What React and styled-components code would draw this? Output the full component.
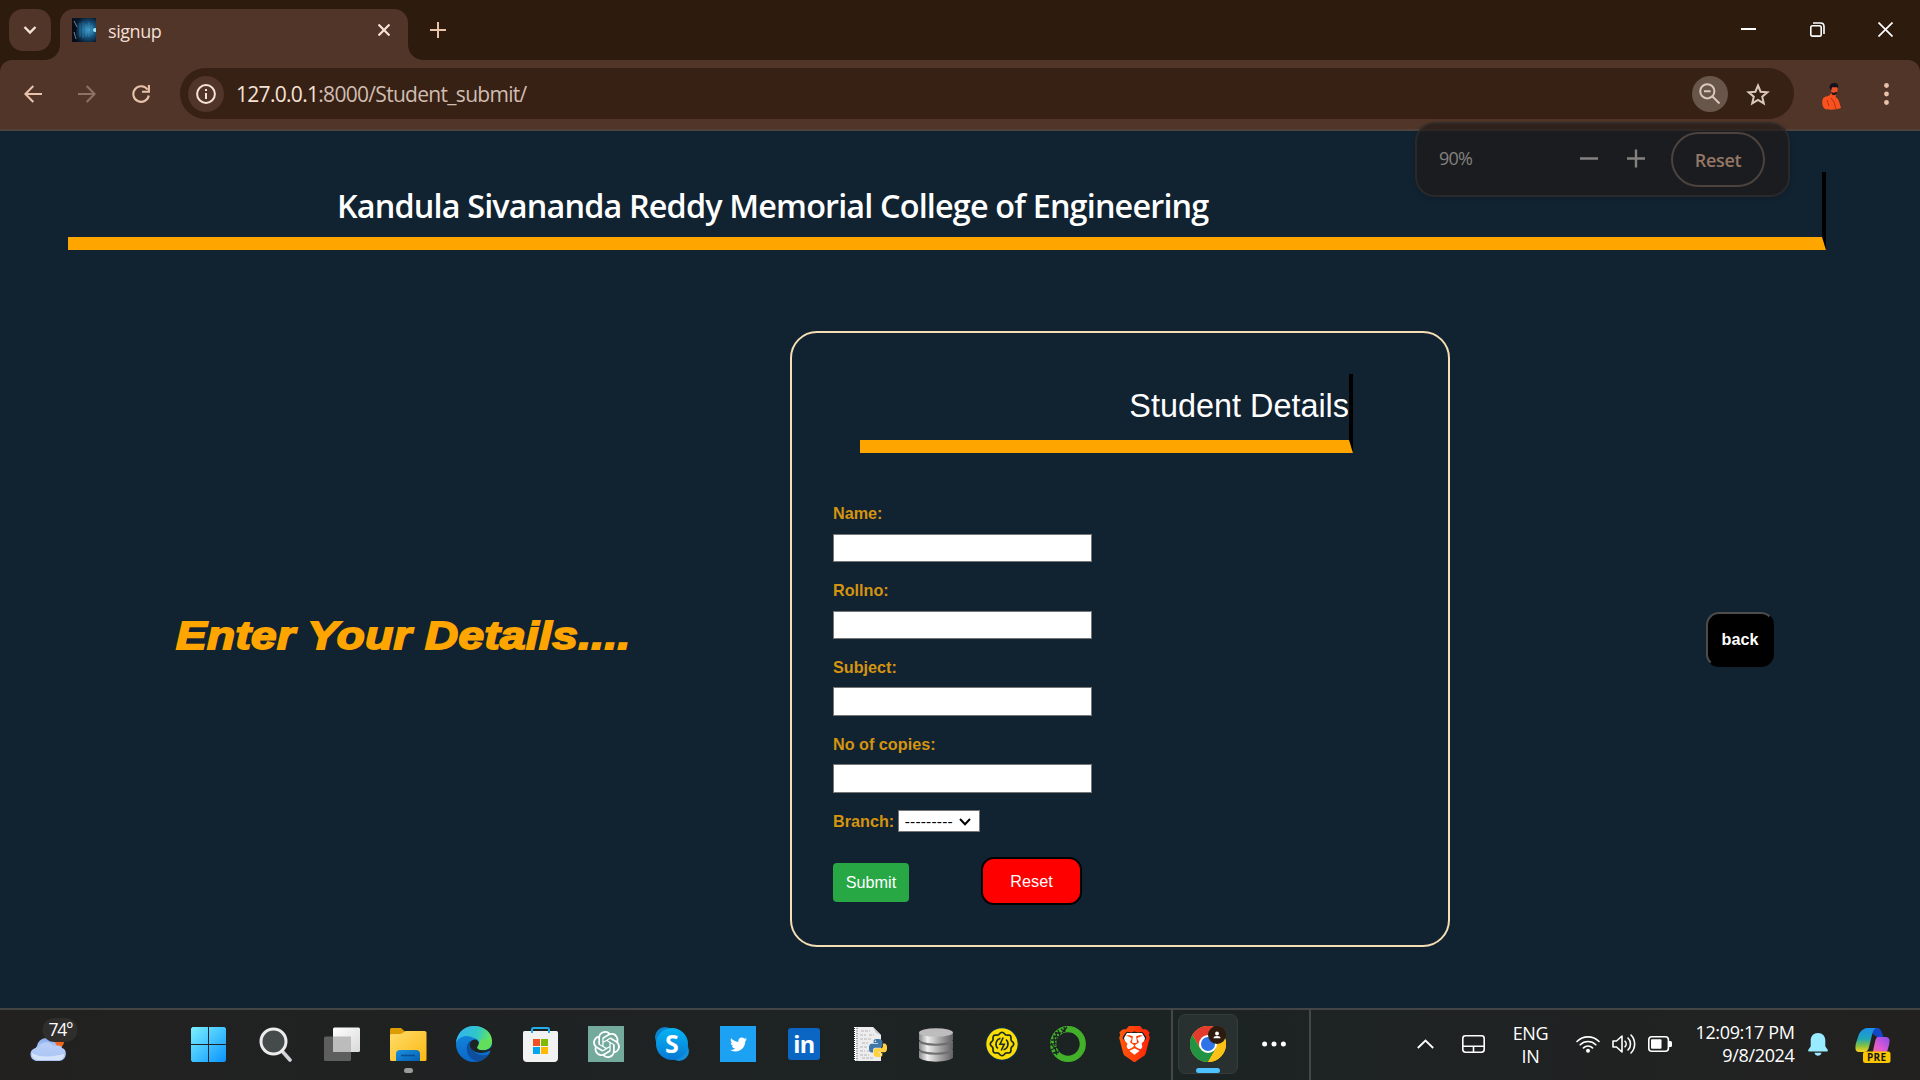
import React from "react";
import styled, { createGlobalStyle, css } from "styled-components";
import { SiOpenai, SiBrave } from "react-icons/si";
import { FaTwitter } from "react-icons/fa";

const ui = '"Open Sans", "Noto Sans", sans-serif';
const arial = '"Liberation Sans", Arial, sans-serif';

const GlobalStyle = createGlobalStyle`
  * { box-sizing: border-box; }
  html, body { margin: 0; padding: 0; background: #112231; overflow: hidden; }
  svg { display: block; flex: none; }
  button, input, select { margin: 0; font: inherit; }
`;

const Window = styled.div`
  width: 1920px;
  height: 1080px;
  display: flex;
  flex-direction: column;
  font-family: ${ui};
  position: relative;
`;

/* ---------- browser chrome ---------- */

const TabStrip = styled.div`
  height: 60px;
  flex: none;
  background: #2d1b0e;
  display: flex;
  align-items: flex-start;
  padding: 9px 27px 0 9px;
`;

const TabSearch = styled.div`
  width: 42px;
  height: 42px;
  border-radius: 14px;
  background: #503528;
  display: grid;
  place-items: center;
`;

const Tab = styled.div`
  position: relative;
  margin-left: 9px;
  width: 348px;
  height: 51px;
  padding: 0 18px 9px 12px;
  border-radius: 14px 14px 0 0;
  background: #503528;
  display: flex;
  align-items: center;

  &::before,
  &::after {
    content: "";
    position: absolute;
    bottom: 0;
    width: 15px;
    height: 15px;
  }
  &::before {
    left: -15px;
    background: radial-gradient(circle at 0 0, transparent 14.5px, #503528 15.2px);
  }
  &::after {
    right: -15px;
    background: radial-gradient(circle at 100% 0, transparent 14.5px, #503528 15.2px);
  }
`;

const TabTitle = styled.span`
  margin: 2px 0 0 12px;
  flex: 1;
  font-size: 18px;
  line-height: 24px;
  letter-spacing: -0.45px;
  color: #f3dfd5;
`;

const NewTab = styled.div`
  margin: 13px 0 0 22px;
`;

const Controls = styled.div`
  margin: 13px 0 0 auto;
  display: flex;
  gap: 53.5px;
`;

const ToolbarBack = styled.div`
  flex: none;
  height: 71px;
  background: #2d1b0e;
`;

const Toolbar = styled.div`
  height: 71px;
  display: flex;
  align-items: center;
  padding: 0 25.5px 1px 24px;
  background: #503528;
  border-bottom: 2px solid #4f433b;
  border-radius: 12px 12px 0 0;
`;

const NavIcons = styled.div`
  display: flex;
  gap: 36px;
  width: 156px;
`;

const Omnibox = styled.div`
  width: 1614px;
  height: 51px;
  margin-bottom: 1px;
  border-radius: 26px;
  background: #372115;
  display: flex;
  align-items: center;
  padding: 1px 24px 0 7.5px;
`;

const RoundChip = styled.div`
  width: 36px;
  height: 36px;
  border-radius: 50%;
  background: ${(p) => p.$bg};
  display: grid;
  place-items: center;
`;

const Url = styled.div`
  flex: 1;
  margin-left: 12.5px;
  font-size: 21px;
  line-height: 30px;
  letter-spacing: -0.7px;
  color: #d0bdb1;

  b {
    font-weight: 400;
    color: #f6e2d7;
  }
`;

const StarSlot = styled.div`
  margin-left: 18px;
`;

const Profile = styled.div`
  margin: 4px 43px 0 28px;
`;

const ZoomBubble = styled.div`
  position: absolute;
  left: 1415px;
  top: 122px;
  width: 375px;
  height: 75px;
  padding: 8px 22px 0 22px;
  border: 2px solid rgba(58, 54, 54, 0.5);
  border-radius: 20px;
  background: rgba(32, 26, 24, 0.67);
  box-shadow: 0 2px 5px rgba(0, 0, 0, 0.15);
  display: flex;
  align-items: flex-start;
  color: #84817f;
`;

const ZoomValue = styled.span`
  width: 141px;
  padding-top: 13px;
  font-size: 18px;
  line-height: 26px;
  letter-spacing: -0.8px;
`;

const ZoomReset = styled.div`
  margin-left: 25px;
  width: 94px;
  height: 55px;
  border: 2px solid #4c433e;
  border-radius: 28px;
  text-align: center;
  font-size: 18px;
  font-weight: 600;
  line-height: 52px;
  letter-spacing: -0.3px;
  color: #957766;
`;

const ZoomSigns = styled.div`
  padding-top: 17px;
`;

/* ---------- page ---------- */

const Page = styled.main`
  flex: 1;
  background: #112231;
  padding: 41px 94px 0 68px;
`;

const ruled = css`
  border-right: 4px solid #000;
  border-bottom: 13px solid #ffa500;
  color: #fff;
`;

const CollegeName = styled.h1`
  ${ruled}
  margin: 0;
  height: 78px;
  padding: 11px 0 0 269px;
  font: 600 32.4px/44px ${ui};
  letter-spacing: -0.85px;
  white-space: nowrap;
`;

const Columns = styled.div`
  margin-top: 81px;
  display: flex;
  align-items: center;
`;

const Prompt = styled.div`
  width: 722px;
  padding: 0 0 6px 108px;
  white-space: nowrap;

  span {
    display: inline-block;
    font: italic 700 38.5px/50px ${arial};
    letter-spacing: 0.35px;
    color: #ffa500;
    -webkit-text-stroke: 1.8px #ffa500;
    transform: scaleX(1.19);
    transform-origin: 0 50%;
  }
`;

const Card = styled.form`
  width: 660px;
  height: 616px;
  border: 2px solid #f5deb3;
  border-radius: 27px;
  padding: 41px 95px 0 41px;
  font-family: ${arial};
`;

const CardTitle = styled.h2`
  ${ruled}
  margin: 0 0 50px 27px;
  height: 79px;
  padding-top: 14px;
  text-align: right;
  font: 400 32.4px/37px ${arial};
`;

const Field = styled.label`
  display: block;
  height: 76.9px;
  font-size: 16.2px;
  font-weight: 700;
  line-height: 20px;
  color: #d4940f;
`;

const TextBox = styled.input`
  display: block;
  margin-top: 10.65px;
  width: 259px;
  height: 28.6px;
  padding: 1px 3px;
  border: 1px solid #767676;
  border-radius: 0;
  background: #fff;
`;

const BranchRow = styled(Field)`
  height: 46px;
  display: flex;
  align-items: flex-start;
`;

const SelectWrap = styled.span`
  position: relative;
  margin: -1px 0 0 3.5px;

  svg {
    position: absolute;
    right: 8.5px;
    top: 8px;
    pointer-events: none;
  }
`;

const Select = styled.select`
  display: block;
  appearance: none;
  width: 82px;
  height: 22px;
  padding: 2px 0 0 6px;
  border: 1px solid #767676;
  border-radius: 0;
  background: #fff;
  color: #000;
  font: 400 15.5px/18px ${arial};
  letter-spacing: 0.2px;
`;

const Actions = styled.div`
  display: flex;
  align-items: center;
  gap: 72px;
`;

const ActionButton = styled.button`
  width: 76px;
  height: 39px;
  margin-top: 3px;
  padding: 0;
  border: 0;
  border-radius: 4px;
  background: #28a745;
  color: #fff;
  font: 400 16.2px/20px ${arial};
`;

const ResetButton = styled(ActionButton)`
  width: 101px;
  height: 48px;
  margin-top: 0;
  border: 2px solid #000;
  border-radius: 13px;
  background: #ff0000;
`;

const BackButton = styled.button`
  margin-left: 256px;
  width: 68px;
  height: 55px;
  padding: 0;
  border: 2px solid;
  border-color: #4d4d4d #000 #000 #4d4d4d;
  border-radius: 13px;
  background: #000;
  color: #fff;
  font: 700 16.2px/20px ${arial};
`;

/* ---------- taskbar ---------- */

const Taskbar = styled.footer`
  flex: none;
  height: 72px;
  border-top: 2px solid #444645;
  background: linear-gradient(90deg, #222120, #1f2222 25%, #1c2323 60%, #202222 85%, #222120);
  display: flex;
  color: #fff;
`;

const Weather = styled.div`
  width: 175px;
  padding: 8px 0 0 30px;
`;

const Slot = styled.div`
  width: ${(p) => p.$w ?? 66}px;
  height: 70px;
  padding-top: ${(p) => p.$top ?? 16}px;
  display: flex;
  flex-direction: column;
  align-items: center;
`;

const RunDot = styled.div`
  margin-top: 6px;
  width: 9px;
  height: 5px;
  border-radius: 3px;
  background: #9a9a9a;
`;

const Tile = styled.div`
  width: 36px;
  height: 36px;
  flex: none;
  background: ${(p) => p.$bg};
  display: grid;
  place-items: center;
`;

const ActiveGroup = styled.div`
  margin-left: 4px;
  width: 140px;
  padding: 4px 0 0 5px;
  border: solid #444746;
  border-width: 0 2px 0 2px;
  display: flex;
`;

const ActiveTile = styled.div`
  width: 60px;
  height: 60px;
  padding-top: 11px;
  border: 1px solid #343b3b;
  border-radius: 7px;
  background: #293030;
  display: flex;
  flex-direction: column;
  align-items: center;
`;

const ActiveBar = styled.div`
  margin-top: 6px;
  width: 24px;
  height: 5px;
  border-radius: 3px;
  background: #4cc2ff;
`;

const More = styled.div`
  padding: 27px 0 0 24px;
`;

const Tray = styled.div`
  flex: 1;
  display: flex;
  align-items: flex-start;
  padding-left: 106px;
`;

const TrayIcon = styled.div`
  width: ${(p) => p.$w}px;
  margin-left: ${(p) => p.$gap ?? 0}px;
  padding-top: ${(p) => p.$top}px;
`;

const TrayText = styled.div`
  width: ${(p) => p.$w}px;
  padding-top: ${(p) => p.$top}px;
  text-align: ${(p) => p.$align};
  font-size: 18px;
  line-height: 23px;
  letter-spacing: ${(p) => p.$ls}px;
  white-space: nowrap;
`;

/* ---------- drawings ---------- */

const Line = ({ w, h, d, color, sw = 2, ...rest }) => (
  <svg width={w} height={h} viewBox={`0 0 ${w} ${h}`} fill="none" stroke={color} strokeWidth={sw} {...rest}>
    <path d={d} />
  </svg>
);

const Favicon = () => (
  <svg width="24" height="24" viewBox="0 0 24 24">
    <defs>
      <radialGradient id="fav" cx=".68" cy=".5" r=".6">
        <stop offset="0" stopColor="#3f9ccb" />
        <stop offset=".5" stopColor="#175580" />
        <stop offset="1" stopColor="#071526" />
      </radialGradient>
    </defs>
    <path fill="url(#fav)" d="M0 0h24v24H0z" />
    <path d="M1 1l4 7-1 9 1 7H0V0z" fill="#060d18" />
    <path d="M2 3l3 6M2 14l2 7" stroke="#8a9eae" strokeWidth=".8" />
    <path d="M8 5v14M11 4v16M14 6v13M17 4v15M20 7v10" stroke="#4aa0c8" strokeWidth=".7" opacity=".6" />
    <circle cx="23" cy="12" r="2" fill="#9fe6ff" />
  </svg>
);

const Avatar = () => (
  <svg width="19" height="27" viewBox="0 0 19 27">
    <path d="M1 15.500c2-3 7-1.500 8-5.500h5c0 2-.5 3 0 4.500 3 1 3.500 6 5 10.500-5 2-13 2-16 1C0 24-.5 18 1 15.500z" fill="#f9521f" />
    <path d="M9 4h7l-1 6-3 2.500-3-2z" fill="#e8532c" />
    <path d="M8 6C6.500 1.500 10 0 12.500 0s4.500 1.500 3.300 5.500L15 4.200h-5l-.8 3.300z" fill="#12141d" />
    <path d="M9 8.500l1 3c2 1.500 4 .5 5-1.500V9l-2 .3-1.500.7z" fill="#291012" />
    <path d="M9 15l3 4 2 7M5 17l2 6" stroke="#b8300e" fill="none" />
  </svg>
);

const CloudIcon = () => (
  <svg width="48" height="46" viewBox="0 0 48 46">
    <defs>
      <linearGradient id="cl" x2="0" y2="1">
        <stop offset="0" stopColor="#86a9ee" />
        <stop offset="1" stopColor="#dfeafd" />
      </linearGradient>
      <linearGradient id="cl2" x2="0" y2="1">
        <stop offset="0" stopColor="#b9cff9" />
        <stop offset="1" stopColor="#a9c3f3" />
      </linearGradient>
    </defs>
    <circle cx="28" cy="24" r="6" fill="#f0661a" />
    <path d="M7 40a10 9 0 0 1 0-12 10 10 0 0 1 19-2l5 14z" fill="url(#cl)" />
    <path d="M8 43c-10 0-10-14 0-13 3-7 13-8 16-1 4-3 8-1 8 1 6 1 5 13-3 13z" fill="url(#cl2)" />
    <path d="M8 42c-4 0-7-3-6-7 8 5 20 4 32 1 0 4-2 6-5 6z" fill="#e2ecfd" opacity=".75" />
    <rect x="12.500" y="0" width="35" height="24" rx="12" fill="#2f2e2d" />
    <text x="18.500" y="18" fontFamily={ui} fontSize="17.500" letterSpacing="-1.200" fill="#fff">74°</text>
  </svg>
);

const WindowsLogo = () => (
  <svg width="35" height="35" viewBox="0 0 35 35">
    <defs>
      <linearGradient id="win" gradientUnits="userSpaceOnUse" x1="0" y1="0" x2="35" y2="35">
        <stop offset="0" stopColor="#7bf0ff" />
        <stop offset=".5" stopColor="#42c3ff" />
        <stop offset="1" stopColor="#0a92ff" />
      </linearGradient>
    </defs>
    <path fill="url(#win)" d="M1.500 0H17v17H0V1.500zM18 0h15.500L35 1.500V17H18zM0 18h17v17H1.500L0 33.500zM18 18h17v15.500L33.500 35H18z" />
  </svg>
);

const SearchGlyph = () => (
  <svg width="33" height="35" viewBox="0 0 33 35">
    <path d="M23 24l8 9" stroke="#d3d4d9" strokeWidth="3.600" strokeLinecap="round" />
    <circle cx="14.500" cy="14.500" r="12.500" fill="#454a4a" stroke="#ececec" strokeWidth="3" />
  </svg>
);

const TaskView = () => (
  <svg width="36" height="35" viewBox="0 0 36 35">
    <defs>
      <linearGradient id="tv" x2="1" y2="1">
        <stop offset="0" stopColor="#fff" />
        <stop offset="1" stopColor="#d9d9d9" />
      </linearGradient>
    </defs>
    <rect y="9.500" width="27" height="24.500" rx="1.500" fill="#5e5e5e" />
    <rect x="9" y=".5" width="27" height="24.500" rx="1.500" fill="url(#tv)" />
    <path d="M9 9.500h18V25H10.500L9 23.500z" fill="#bcbcbc" />
  </svg>
);

const Folder = () => (
  <svg width="37" height="35" viewBox="0 0 37 35">
    <defs>
      <linearGradient id="fo" x2="1" y2="1">
        <stop offset="0" stopColor="#ffdc6b" />
        <stop offset="1" stopColor="#fbb912" />
      </linearGradient>
      <linearGradient id="fb" x2="1" y2="1">
        <stop offset="0" stopColor="#1c8fe0" />
        <stop offset="1" stopColor="#0560b0" />
      </linearGradient>
    </defs>
    <path d="M0 9V2.500Q0 1 1.500 1H11l4.500 4V9z" fill="#dd9c03" />
    <path d="M0 8q0-1 2-1h8c3 0 4-3 6-3h18.500q2 0 2 1.500v27q0 1.500-1.500 1.500H1.500Q0 34 0 32.500z" fill="url(#fo)" />
    <path d="M6 34V27q0-4 4-4h16q4 0 4 4v7z" fill="url(#fb)" />
    <path d="M11 28.500h14" stroke="#0a4f91" strokeWidth="1.600" />
  </svg>
);

const Edge = () => (
  <svg width="36" height="36" viewBox="0 0 36 36">
    <defs>
      <linearGradient id="eg1" x1="0" y1=".3" x2="1" y2=".5">
        <stop offset="0" stopColor="#35b4f0" />
        <stop offset=".55" stopColor="#2fc6c9" />
        <stop offset="1" stopColor="#6be84f" />
      </linearGradient>
      <linearGradient id="eg2" x2="0" y2="1">
        <stop offset="0" stopColor="#1490df" />
        <stop offset="1" stopColor="#0a66c9" />
      </linearGradient>
    </defs>
    <circle cx="18" cy="18" r="18" fill="url(#eg2)" />
    <path d="M0 17C1 7 8 0 18 0c11 0 18 7 18 15 0 6-4 9-9 9-5 0-7-2-5-4 3-4 0-7-4-8C11 8 3 10 0 17z" fill="url(#eg1)" />
    <path d="M14 15c-6 5-4 18 8 20.500C27 34 31 31 33 28c-9 4-18-2-17-9z" fill="#0e4e9c" />
    <path d="M18 13.500c-5 1-5 7-2 10 5 5 13 4 18 1 .8.300.5 1-.5 3L38 25l-2-7c0 5-6 7-11 6-4-1-4-3-3-4 2-3 0-7-4-6.500z" fill="#1d2424" />
    <path d="M36 15c0 6-4 9-9 9-5 0-7-2-5-4l3-7z" fill="#62dd5c" />
  </svg>
);

const Store = () => (
  <svg width="35" height="35" viewBox="0 0 35 35">
    <path d="M0 5.500Q0 4 1.500 4h32Q35 4 35 5.500V31q0 4-4 4H4q-4 0-4-4z" fill="#f2f2f2" />
    <path d="M9 6V2.500Q9 1 10.500 1h14Q26 1 26 2.500V6" fill="none" stroke="#22aeea" strokeWidth="2" />
    <path d="M10 12h7v7h-7z" fill="#f25022" />
    <path d="M18 12h7v7h-7z" fill="#7fba00" />
    <path d="M10 20h7v7h-7z" fill="#00a4ef" />
    <path d="M18 20h7v7h-7z" fill="#ffb900" />
  </svg>
);

const Skype = () => (
  <svg width="34" height="34" viewBox="0 0 34 34">
    <defs>
      <linearGradient id="sk" x2="0" y2="1">
        <stop offset="0" stopColor="#06b4f4" />
        <stop offset="1" stopColor="#0878d4" />
      </linearGradient>
    </defs>
    <circle cx="10" cy="10" r="10" fill="#0a84cf" />
    <circle cx="24" cy="24" r="10" fill="#128fdb" />
    <circle cx="17" cy="17" r="16" fill="url(#sk)" />
    <text x="17" y="26" textAnchor="middle" fontFamily={ui} fontWeight="700" fontSize="25" fill="#fff">S</text>
  </svg>
);

const LinkedIn = () => (
  <svg width="32" height="32" viewBox="0 0 32 32">
    <rect width="32" height="32" rx="3" fill="#0a66c2" />
    <text x="16" y="25" textAnchor="middle" fontFamily={ui} fontWeight="700" fontSize="23.500" letterSpacing="-.6" fill="#fff">in</text>
  </svg>
);

const pySnake =
  "M14.25.18l.9.2.73.26.59.3.45.32.34.34.25.34.16.33.1.3.04.26.02.2-.01.13V8.5l-.05.63-.13.55-.21.46-.26.38-.3.31-.33.25-.35.19-.35.14-.33.1-.3.07-.26.04-.21.02H8.77l-.69.05-.59.14-.5.22-.41.27-.33.32-.27.35-.2.36-.15.37-.1.35-.07.32-.04.27-.02.21v3.06H3.17l-.21-.03-.28-.07-.32-.12-.35-.18-.36-.26-.36-.36-.35-.46-.32-.59-.28-.73-.21-.88-.14-1.05-.05-1.23.06-1.22.16-1.04.24-.87.32-.71.36-.57.4-.44.42-.33.42-.24.4-.16.36-.1.32-.05.24-.01h.16l.06.01h8.16v-.83H6.18l-.01-2.75-.02-.37.05-.34.11-.31.17-.28.25-.26.31-.23.38-.2.44-.18.51-.15.58-.12.64-.1.71-.06.77-.04.84-.02 1.27.05z";

const PythonFile = () => (
  <svg width="33" height="35" viewBox="0 0 33 35">
    <path d="M1 0h18l8 8v26H1z" fill="#ededed" />
    <path d="M19 0l8 8-5-2z" fill="#c4c4c4" />
    <path d="M1 0v34" stroke="#fff" strokeWidth="2" strokeDasharray="1 1" />
    <path d="M3 1v33" stroke="#555" strokeWidth="1" strokeDasharray="1 1.500" />
    <path d="M7 4h9M6 8h6m3 0h5M6 12h11M8 16h6M6 20h8M6 24h5m2 0h3M6 28h9M8 31h12" stroke="#b5b5b5" strokeDasharray="3 1" />
    <g transform="translate(15 12) scale(.75)">
      <path d={pySnake} fill="#3f78a8" />
      <path d={pySnake} fill="#ffd140" transform="rotate(180 12 12)" />
      <circle cx="8.500" cy="3" r="1" fill="#fff" />
      <circle cx="15.500" cy="21" r="1" fill="#fff" />
    </g>
  </svg>
);

const Database = () => (
  <svg width="34" height="35" viewBox="0 0 34 35">
    <defs>
      <linearGradient id="db">
        <stop offset="0" stopColor="#8a8a8a" />
        <stop offset=".25" stopColor="#efefef" />
        <stop offset=".6" stopColor="#a8a8a8" />
        <stop offset="1" stopColor="#606060" />
      </linearGradient>
    </defs>
    {[20, 11, 2].map((y) => (
      <g key={y} transform={`translate(0 ${y})`}>
        <path d="M0 3.500v7c4 5.500 30 5.500 34 0v-7z" fill="url(#db)" />
        <ellipse cx="17" cy="3.500" rx="17" ry="4.300" fill={y === 2 ? "#bdbdbd" : "#6f6f6f"} />
      </g>
    ))}
  </svg>
);

const gearPath = (() => {
  const pts = [];
  for (let i = 0; i <= 96; i++) {
    const a = (i / 96) * Math.PI * 2;
    const r = 10.8 + 0.9 * Math.cos(a * 8);
    pts.push(`${(17 + r * Math.cos(a)).toFixed(2)} ${(17 + r * Math.sin(a)).toFixed(2)}`);
  }
  return `M${pts.join("L")}z`;
})();

const BoltGear = () => (
  <svg width="34" height="34" viewBox="0 0 34 34">
    <circle cx="17" cy="17" r="16.300" fill="#fbdc04" stroke="#0b2b4a" strokeWidth="1.200" />
    <path d={gearPath} fill="none" stroke="#1b2c22" strokeWidth="1.700" />
    <path d="M15.500 11.200a6 6 0 0 0-2.500 10.300M18.500 22.800a6 6 0 0 0 2.500-10.300" fill="none" stroke="#1b2c22" strokeWidth="1.600" />
    <path d="M18.200 10.500l-3.200 6.700h4.200l-3 6.300" fill="none" stroke="#1b2c22" strokeWidth="1.600" />
  </svg>
);

const Anaconda = () => (
  <svg width="36" height="36" viewBox="0 0 36 36">
    <circle cx="18" cy="18" r="14.800" fill="none" stroke="#43b02a" strokeWidth="6.200" />
    <path d="M17 1L12 7M14 1l1 5M11 3l4 3M8 4l2 6M5 7l6 0M3 10l6 1M6 6l1 8M1 14l6 0M4 11l1 9M0 19l6-2M1 17l4 6M1 24l6-3M5 21l2 8M3 27l6-1" stroke="#1c2323" strokeWidth="1.300" />
  </svg>
);

const Brave = () => (
  <svg width="31" height="36" viewBox="0 0 31 36">
    <defs>
      <linearGradient id="br">
        <stop offset="0" stopColor="#ff5a0a" />
        <stop offset="1" stopColor="#ff2409" />
      </linearGradient>
    </defs>
    <path d="M8 7h15l3 5-3 12-7.500 6L8 24 5 12z" fill="#fff" />
    <SiBrave x="-2.500" y="0" size={36} style={{ fill: "url(#br)" }} />
  </svg>
);

const Chrome = () => (
  <svg width="36" height="36" viewBox="0 0 36 36">
    <circle cx="18" cy="18" r="18" fill="#fbc116" />
    <path d="M2.400 9A18 18 0 0 1 33.600 9H18L9 20z" fill="#e33b2e" />
    <path d="M2.400 9A18 18 0 0 0 18 36L26 22.500 10.200 22.500z" fill="#229342" />
    <path d="M18 9h15.600A18 18 0 0 1 18 36l7.800-13.500z" fill="#fbc116" />
    <circle cx="18" cy="18" r="9" fill="#fff" />
    <circle cx="18" cy="18" r="7" fill="#2f73e8" />
    <circle cx="27" cy="9" r="9" fill="#2d1b0e" />
    <circle cx="27" cy="7.500" r="1.900" fill="#fff" />
    <path d="M23.500 12.200q0-2.200 3.500-2.200t3.500 2.200z" fill="#fff" />
  </svg>
);

const Touchpad = () => (
  <svg width="23" height="18" viewBox="0 0 23 18" fill="none" stroke="#fff" strokeWidth="1.600">
    <rect x=".8" y=".8" width="21.400" height="16.400" rx="2.600" />
    <path d="M1 11.200h21M11.500 11.200V17" />
  </svg>
);

const Wifi = () => (
  <svg width="24" height="18" viewBox="0 0 24 18" fill="none" stroke="#fff" strokeWidth="1.600" strokeLinecap="round">
    <path d="M1 6.500a15.500 15.500 0 0 1 22 0M4.200 9.800a11 11 0 0 1 15.600 0M7.500 12.900a6.400 6.400 0 0 1 9 0" />
    <circle cx="12" cy="15.800" r="2" fill="#fff" stroke="none" />
  </svg>
);

const Volume = () => (
  <svg width="24" height="22" viewBox="0 0 24 22" fill="none" stroke="#fff" strokeWidth="1.600" strokeLinecap="round" strokeLinejoin="round">
    <path d="M1 8h3.500L10 3v16l-5.500-5H1zM13 8.200a4 4 0 0 1 0 5.600M16 5a8.500 8.500 0 0 1 0 12M19 2a13 13 0 0 1 0 18" />
  </svg>
);

const Battery = () => (
  <svg width="24" height="16" viewBox="0 0 24 16">
    <rect x=".8" y=".8" width="19.600" height="14.400" rx="3" fill="none" stroke="#fff" strokeWidth="1.600" />
    <rect x="3" y="3.200" width="10.500" height="9.600" rx="1" fill="#fff" />
    <path d="M21 5h1.500q1.500 0 1.500 1.500v3q0 1.500-1.500 1.500H21z" fill="#fff" />
  </svg>
);

const Bell = () => (
  <svg width="20" height="23" viewBox="0 0 20 23" fill="#99ebff">
    <path d="M10 0c4.500 0 7.300 3.200 7.300 7.300v6l2.500 3.700q.4 1.400-1 1.400H1.200q-1.400 0-1-1.400l2.500-3.700v-6C2.700 3.200 5.500 0 10 0zM6.500 19.800h7c-.6 4-6.400 4-7 0z" />
  </svg>
);

const Copilot = () => (
  <svg width="36" height="35" viewBox="0 0 36 35">
    <defs>
      <linearGradient id="co1" x2="0" y2="1">
        <stop offset="0" stopColor="#1b8fe8" />
        <stop offset=".45" stopColor="#1fa6b8" />
        <stop offset=".75" stopColor="#86c240" />
        <stop offset="1" stopColor="#ffd21c" />
      </linearGradient>
      <linearGradient id="co2" x1="1" x2="0" y2="1">
        <stop offset="0" stopColor="#8a4df0" />
        <stop offset=".5" stopColor="#e05ad0" />
        <stop offset="1" stopColor="#ff7a55" />
      </linearGradient>
    </defs>
    <path d="M10 0h12c3 0 4 2 5 5l1.500 4H22z" fill="#1546c8" />
    <path d="M9 1q1-1 4-1h9c-3 0-4 3-5 7l-3 12q-1 5-5 5H4c-4 0-4-4-3-9l3-9q2-4 5-5z" fill="url(#co1)" />
    <path d="M23 9h8c4 0 4 4 3 8l-2 7q-2 4-4 4H12c4 0 5-2 6-5l2-9q1-5 3-5z" fill="url(#co2)" />
    <rect x="8" y="23.500" width="27.500" height="11.500" rx="2.500" fill="#fbc600" />
    <text x="21.700" y="33" textAnchor="middle" fontFamily={ui} fontWeight="700" fontSize="10" letterSpacing=".3" fill="#161616">PRE</text>
  </svg>
);

const fields = ["Name:", "Rollno:", "Subject:", "No of copies:"];

const pinned = [
  { id: "start", icon: <WindowsLogo />, top: 17, w: 67 },
  { id: "search", icon: <SearchGlyph />, top: 17, w: 67 },
  { id: "tasks", icon: <TaskView />, top: 17 },
  { id: "files", icon: <Folder />, top: 17, running: true },
  { id: "edge", icon: <Edge /> },
  { id: "store", icon: <Store />, top: 17 },
  { id: "gpt", icon: <Tile $bg="#74aa9c"><SiOpenai size={27} color="#fff" /></Tile> },
  { id: "skype", icon: <Skype />, top: 17 },
  { id: "twitter", icon: <Tile $bg="#1da1f2"><FaTwitter size={17} color="#fff" /></Tile> },
  { id: "linkedin", icon: <LinkedIn />, top: 18 },
  { id: "python", icon: <PythonFile />, top: 16.5 },
  { id: "database", icon: <Database />, top: 16.5 },
  { id: "bolt", icon: <BoltGear />, top: 17 },
  { id: "anaconda", icon: <Anaconda /> },
  { id: "brave", icon: <Brave /> },
];

export default function App() {
  return (
    <Window>
      <GlobalStyle />
      <TabStrip>
        <TabSearch>
          <Line w={14} h={10} d="M1.500 2l5.500 5.500L12.500 2" color="#f6e2d7" sw={2.4} />
        </TabSearch>
        <Tab>
          <Favicon />
          <TabTitle>signup</TabTitle>
          <Line w={12} h={12} d="M.5.5l11 11M11.500.5l-11 11" color="#f6e2d7" sw={2.2} />
        </Tab>
        <NewTab>
          <Line w={16} h={16} d="M8 0v16M0 8h16" color="#e9c2ac" />
        </NewTab>
        <Controls>
          <Line w={15} h={15} d="M0 7h15" color="#fff" />
          <Line w={15} h={15} d="M3 1h7.500Q14 1 14 4.500V12M2.500 3.700h7q1.700 0 1.700 1.700v7q0 1.700-1.700 1.700h-7Q.8 14.100.8 12.400v-7Q.8 3.700 2.500 3.700z" color="#fff" sw={1.6} />
          <Line w={15} h={15} d="M.5.5l14 14M14.500.5l-14 14" color="#fff" sw={1.7} />
        </Controls>
      </TabStrip>
      <ToolbarBack>
        <Toolbar>
          <NavIcons>
            <Line w={18} h={18} d="M18 9H1.500M9.300 1L1.400 9l7.900 8" color="#e9c2ac" sw={2.1} />
            <Line w={18} h={18} d="M0 9h16.500M8.700 1l7.900 8-7.900 8" color="#8f7263" sw={2.1} />
            <Line w={18} h={18} d="M15.500 4.500A7.800 7.800 0 1 0 16.800 10.500M16.900 0v6.800H10" color="#e9c2ac" sw={2.1} />
          </NavIcons>
          <Omnibox>
            <RoundChip $bg="#503528">
              <svg width="20" height="20" viewBox="0 0 20 20" fill="none" stroke="#f6e2d7" strokeWidth="2">
                <circle cx="10" cy="10" r="8.900" />
                <path d="M10 9v6M10 5v2.100" />
              </svg>
            </RoundChip>
            <Url><b>127.0.0.1</b>:8000/Student_submit/</Url>
            <RoundChip $bg="#69564b">
              <Line w={22} h={22} d="M8.300 1.200a7.100 7.100 0 1 0 0 14.200a7.100 7.100 0 1 0 0-14.200zM13.500 13.500l7 7M5 8.300h6.600" color="#dbc8bd" />
            </RoundChip>
            <StarSlot>
              <Line w={24} h={23} d="M12 2.500l2.600 6.200 6.800.6-5.200 4.400 1.600 6.600L12 16.800l-5.800 3.500 1.600-6.600-5.200-4.400 6.800-.6z" color="#dbc8bd" />
            </StarSlot>
          </Omnibox>
          <Profile><Avatar /></Profile>
          <svg width="5" height="22" viewBox="0 0 5 22" fill="#e9c2ac">
            <circle cx="2.500" cy="2.500" r="2.400" />
            <circle cx="2.500" cy="11" r="2.400" />
            <circle cx="2.500" cy="19.500" r="2.400" />
          </svg>
        </Toolbar>
      </ToolbarBack>

      <Page>
        <CollegeName>Kandula Sivananda Reddy Memorial College of Engineering</CollegeName>
        <Columns>
          <Prompt><span>Enter Your Details....</span></Prompt>
          <Card onSubmit={(e) => e.preventDefault()}>
            <CardTitle>Student Details</CardTitle>
            {fields.map((name) => (
              <Field key={name}>
                {name}
                <TextBox />
              </Field>
            ))}
            <BranchRow>
              Branch:
              <SelectWrap>
                <Select>
                  <option>---------</option>
                </Select>
                <Line w={12} h={8} d="M1 1l5 5.200L11 1" color="#000" sw={2} />
              </SelectWrap>
            </BranchRow>
            <Actions>
              <ActionButton>Submit</ActionButton>
              <ResetButton type="reset">Reset</ResetButton>
            </Actions>
          </Card>
          <BackButton>back</BackButton>
        </Columns>
      </Page>

      <Taskbar>
        <Weather><CloudIcon /></Weather>
        {pinned.map((p) => (
          <Slot key={p.id} $top={p.top} $w={p.w}>
            {p.icon}
            {p.running && <RunDot />}
          </Slot>
        ))}
        <ActiveGroup>
          <ActiveTile>
            <Chrome />
            <ActiveBar />
          </ActiveTile>
          <More>
            <svg width="24" height="6" viewBox="0 0 24 6" fill="#fff">
              <circle cx="2.600" cy="3" r="2.500" />
              <circle cx="12" cy="3" r="2.500" />
              <circle cx="21.400" cy="3" r="2.500" />
            </svg>
          </More>
        </ActiveGroup>
        <Tray>
          <TrayIcon $w={45} $top={29}><Line w={17} h={10} d="M.8 9l7.700-7.500L16.200 9" color="#fff" sw={1.8} /></TrayIcon>
          <TrayIcon $w={43} $top={25}><Touchpad /></TrayIcon>
          <TrayText $w={51} $top={12} $align="center" $ls={-0.4}>ENG<br />IN</TrayText>
          <TrayIcon $w={36} $top={25} $gap={20}><Wifi /></TrayIcon>
          <TrayIcon $w={36} $top={23}><Volume /></TrayIcon>
          <TrayIcon $w={36} $top={26}><Battery /></TrayIcon>
          <TrayText $w={110.5} $top={11} $align="right" $ls={-0.35}>12:09:17 PM<br />9/8/2024</TrayText>
          <TrayIcon $w={47} $top={23} $gap={13.5}><Bell /></TrayIcon>
          <TrayIcon $w={36} $top={18}><Copilot /></TrayIcon>
        </Tray>
      </Taskbar>

      <ZoomBubble>
        <ZoomValue>90%</ZoomValue>
        <ZoomSigns>
          <Line w={66} h={20} d="M0 9.500h18M47 9.500h18M56 .5v18" color="#84817f" sw={2.4} />
        </ZoomSigns>
        <ZoomReset>Reset</ZoomReset>
      </ZoomBubble>
    </Window>
  );
}
